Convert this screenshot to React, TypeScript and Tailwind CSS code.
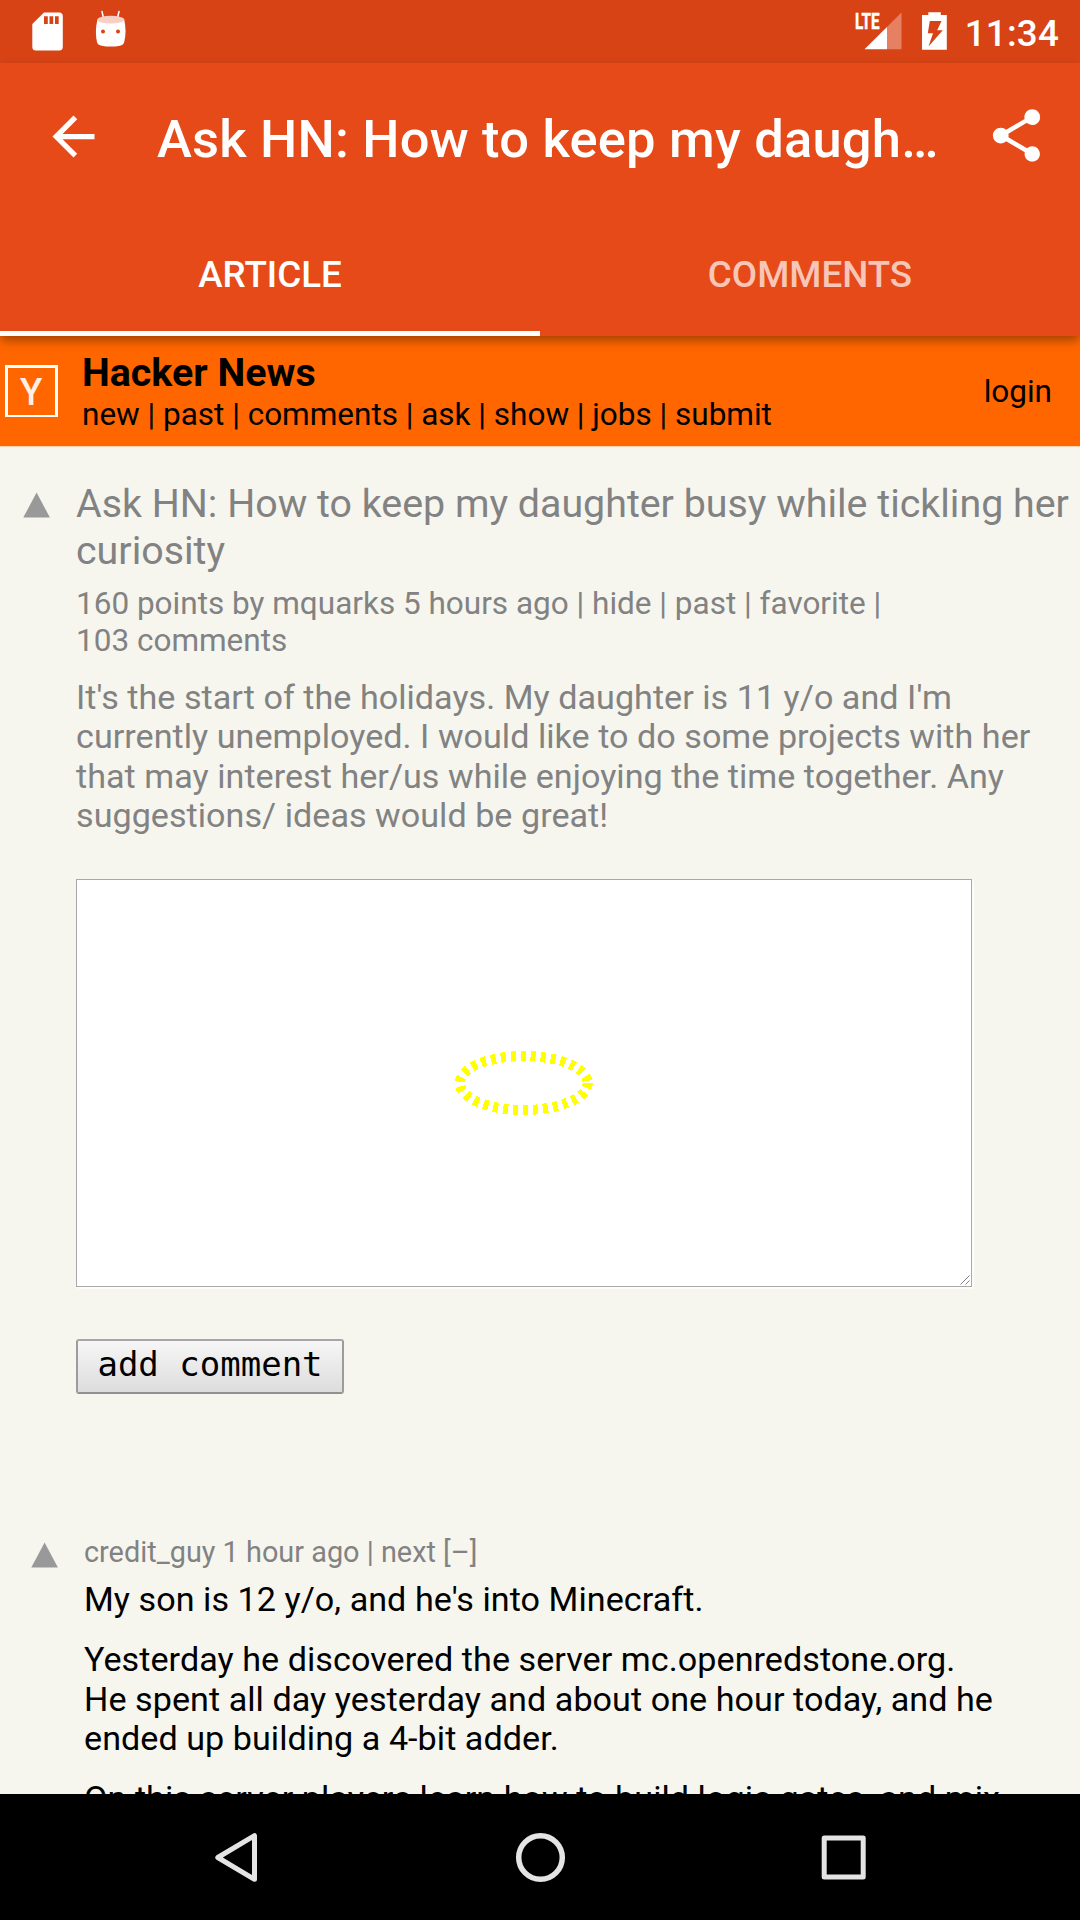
import React from "react";

function StatusBar() {
  return (
    <div className="flex h-[63px] shrink-0 items-start justify-between bg-[#d84315] pl-[32px] pr-[21px]">
      <div className="flex items-start pt-[10px]">
        <svg width="31" height="42" viewBox="0 0 31 42" className="shrink-0">
          <path
            fillRule="evenodd"
            fill="#fff"
            d="M12 2.4h15.200a3.700 3.700 0 0 1 3.600 3.600v31a3.700 3.700 0 0 1-3.600 3.600H4a3.700 3.700 0 0 1-3.700-3.600V14zM12 6.300v7.700h3.800V6.300zm5.500 0v7.700h3.700V6.300zm5.500 0v7.700h3.700V6.300z"
          />
        </svg>
        <svg width="32" height="38" viewBox="0 0 32 38" className="ml-[32px] shrink-0">
          <path d="M7 1.500l1.800 8M24 1.500l-1.800 8" stroke="#fff" strokeWidth="1.500" strokeLinecap="round" />
          <path
            fill="#fff"
            d="M2.400 9.500Q-0.500 22 2.200 33Q3.200 35.200 6.500 35.700Q15.700 37.400 25 35.700Q28.200 35.200 29 33Q32 22 29.200 9.500z"
          />
          <ellipse cx="15.800" cy="9.700" rx="13.500" ry="3.900" fill="#f7cfc4" />
          <circle cx="8" cy="21.500" r="2" fill="#d84315" />
          <circle cx="23" cy="21.500" r="2" fill="#d84315" />
        </svg>
      </div>
      <div className="flex items-start">
        <svg width="50" height="52" viewBox="0 0 50 52" className="shrink-0">
          <path d="M33 27L47.500 12.500V49.300H33z" fill="#fff" fillOpacity=".33" />
          <path d="M10.500 49.300L33 27v22.300z" fill="#fff" />
          <text
            x="1"
            y="29.300"
            fill="#fff"
            stroke="#fff"
            strokeWidth="0.500"
            fontFamily="Roboto"
            fontWeight="700"
            fontSize="22.500"
            textLength="24.500"
            lengthAdjust="spacingAndGlyphs"
          >
            LTE
          </text>
        </svg>
        <svg width="25" height="52" viewBox="0 0 25 52" className="ml-[18px] shrink-0">
          <path
            fillRule="evenodd"
            fill="#fff"
            d="M6.300 12.300h12.500v2.700h6v34.700H0V15h6.300zM7.800 21L5.800 33.300h5.200L6.500 46.500L20.800 30.300h-5.600l4.300-9.300z"
          />
        </svg>
        <span className="ml-[18px] mt-[12px] text-[36.75px] font-medium leading-[44px] tracking-[0.2px] text-white">
          11:34
        </span>
      </div>
    </div>
  );
}

function Toolbar() {
  return (
    <div className="flex h-[147px] items-center">
      <button className="ml-[42px]">
        <svg width="63" height="63" viewBox="0 0 24 24" fill="#fff">
          <path d="M20 11H7.830l5.590-5.590L12 4l-8 8 8 8 1.410-1.410L7.830 13H20v-2z" />
        </svg>
      </button>
      <h1 className="ml-[52px] mt-[4px] whitespace-nowrap text-[52.5px] font-medium leading-[62px] tracking-[0.2px] text-white">
        Ask HN: How to keep my daugh…
      </h1>
      <button className="ml-auto mr-[32px]">
        <svg width="63" height="63" viewBox="0 0 24 24" fill="#fff" className="-mt-[2px]">
          <path d="M18 16.080c-.760 0-1.440.300-1.960.770L8.910 12.700c.050-.230.090-.460.090-.700s-.040-.470-.090-.700l7.050-4.110c.540.500 1.250.810 2.040.810 1.660 0 3-1.340 3-3s-1.340-3-3-3-3 1.340-3 3c0 .240.040.470.090.700L8.040 9.810C7.500 9.310 6.790 9 6 9c-1.660 0-3 1.340-3 3s1.340 3 3 3c.790 0 1.500-.310 2.040-.810l7.120 4.160c-.050.210-.080.430-.080.650 0 1.610 1.310 2.920 2.920 2.920 1.610 0 2.920-1.310 2.920-2.920s-1.310-2.920-2.920-2.920z" />
        </svg>
      </button>
    </div>
  );
}

function Tabs() {
  return (
    <div className="grid h-[126px] grid-cols-2 text-center text-[36.75px] font-medium">
      <div className="border-b-[5px] border-white pt-[43px] leading-[44px] text-white">ARTICLE</div>
      <div className="pt-[43px] leading-[44px] text-white/70">COMMENTS</div>
    </div>
  );
}

function SiteHeader() {
  return (
    <div className="flex h-[111px] shrink-0 items-start border-b border-[#fbd3b0] bg-[#ff6600] text-black">
      <div className="ml-[5px] mt-[29px] flex h-[52px] w-[53px] items-center justify-center border-[3px] border-b-2 border-white">
        <span className="scale-x-90 text-[37px] font-semibold leading-none text-white/90 [font-family:Inter,sans-serif]">
          Y
        </span>
      </div>
      <div className="ml-[24px] mt-[14px] whitespace-nowrap">
        <div className="text-[39.375px] font-bold leading-[46px]">Hacker News</div>
        <div className="text-[31.5px] leading-[37px] -tracking-[0.01px]">
          new | past | comments | ask | show | jobs | submit
        </div>
      </div>
      <div className="ml-auto mr-[28px] mt-[37px] text-[31.5px] leading-[37px]">login</div>
    </div>
  );
}

function Upvote() {
  return (
    <svg width="28" height="26" viewBox="0 0 28 26" className="shrink-0">
      <path d="M13.600 0.500L26.900 25.500H0.300z" fill="#999" />
    </svg>
  );
}

function Story() {
  return (
    <div className="flex items-start pl-[23px] pt-[33px] text-[#828282]">
      <div className="mt-[12px]">
        <Upvote />
      </div>
      <div className="ml-[25px] min-w-0 flex-1">
        <div className="whitespace-nowrap text-[39.375px] leading-[47px]">
          Ask HN: How to keep my daughter busy while tickling her
          <br />
          curiosity
        </div>
        <div className="mt-[11px] text-[31.5px] leading-[37px]">
          160 points by mquarks 5 hours ago | hide | past | favorite |
          <br />
          103 comments
        </div>
        <div className="mt-[19px] whitespace-nowrap text-[34.125px] leading-[39.375px] tracking-[0.03px]">
          It's the start of the holidays. My daughter is 11 y/o and I'm
          <br />
          currently unemployed. I would like to do some projects with her
          <br />
          that may interest her/us while enjoying the time together. Any
          <br />
          suggestions/ ideas would be great!
        </div>
        <div className="relative mt-[43px] flex h-[408px] w-[896px] items-center justify-center border border-[#a9a9a9] bg-white shadow-[2px_2px_0_#fcfcfa]">
          <svg width="142" height="66" viewBox="0 0 142 66" className="shrink-0">
            <ellipse
              cx="70.700"
              cy="33"
              rx="64"
              ry="27"
              fill="none"
              stroke="#ffff00"
              strokeWidth="10"
              strokeDasharray="5 5"
              shapeRendering="crispEdges"
            />
          </svg>
          <svg width="10" height="10" viewBox="0 0 10 10" className="absolute bottom-px right-px">
            <path d="M0.500 9.500L9.500 0.500M5.500 9.500L9.500 5.500" stroke="#808080" strokeWidth="1" />
          </svg>
        </div>
        <button className="mt-[52px] flex h-[55px] w-[268px] items-start justify-center rounded-[3px] border-[2.5px] border-x-[#9c9c9c] border-b-[#919191] border-t-[#a6a6a6] bg-linear-to-b from-[#f6f6f6] to-[#dddddd] text-[34px] leading-[46px] text-black [font-family:'DejaVu_Sans_Mono',monospace]">
          add comment
        </button>
      </div>
    </div>
  );
}

function Comment() {
  return (
    <div className="mt-[141px] flex items-start whitespace-nowrap pl-[31px]">
      <div className="mt-[7px]">
        <Upvote />
      </div>
      <div className="ml-[25px]">
        <div className="text-[28.875px] leading-[34px] text-[#828282]">credit_guy 1 hour ago | next [–]</div>
        <div className="mt-[11px] text-[34.125px] leading-[39.375px] tracking-[0.05px] text-black">
          <p>My son is 12 y/o, and he's into Minecraft.</p>
          <p className="mt-[21.4px]">
            Yesterday he discovered the server mc.openredstone.org.
            <br />
            He spent all day yesterday and about one hour today, and he
            <br />
            ended up building a 4-bit adder.
          </p>
          <p className="mt-[21px]">On this server players learn how to build logic gates, and mix</p>
        </div>
      </div>
    </div>
  );
}

function NavBar() {
  return (
    <div className="flex h-[126px] shrink-0 items-center justify-between bg-black pl-[205px] pr-[205px]">
      <svg width="63" height="63" viewBox="0 0 63 63" fill="none" stroke="#e4e4e4">
        <path d="M12.800 31.500L49.500 9.700V53.300z" strokeWidth="5" strokeLinejoin="round" />
      </svg>
      <svg width="63" height="63" viewBox="0 0 63 63" fill="none" stroke="#e4e4e4">
        <circle cx="31.500" cy="31.500" r="21.800" strokeWidth="5.500" />
      </svg>
      <svg width="63" height="63" viewBox="0 0 63 63" fill="none" stroke="#e4e4e4">
        <rect x="12.200" y="12" width="39" height="39" strokeWidth="5" strokeLinejoin="round" />
      </svg>
    </div>
  );
}

export default function App() {
  return (
    <div className="flex h-[1920px] w-[1080px] flex-col overflow-hidden bg-[#f6f6ef] [font-family:Roboto,sans-serif]">
      <StatusBar />
      <div className="relative z-10 shrink-0 bg-[#e64a19] shadow-[0_5px_10px_-1px_rgba(0,0,0,0.38)]">
        <Toolbar />
        <Tabs />
      </div>
      <SiteHeader />
      <div className="min-h-0 flex-1 overflow-hidden">
        <Story />
        <Comment />
      </div>
      <NavBar />
    </div>
  );
}
